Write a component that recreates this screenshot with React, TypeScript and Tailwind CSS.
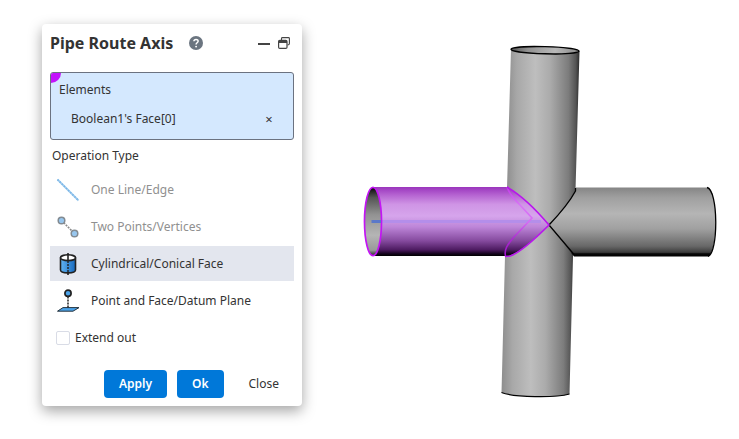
import React, { useState } from 'react';

interface Operation {
  id: string;
  label: string;
  icon: React.ReactNode;
  disabled?: boolean;
}

const LineIcon = () => (
  <svg viewBox="0 0 24 24" className="w-6 h-6">
    <path d="M1.5 1.5 L22.5 22.5" stroke="#a3cdef" strokeWidth="1.9" />
    <path d="M1.5 1.5 L22.5 22.5" stroke="#78b5e6" strokeWidth="1.6" strokeDasharray="1.5 1.5" />
  </svg>
);

const PointsIcon = () => (
  <svg viewBox="0 0 24 24" className="w-6 h-6">
    <path d="M5.5 5.5 L18.5 18.5" stroke="#8b8b8b" strokeWidth="1.6" strokeDasharray="2 1" />
    <circle cx="5.5" cy="5.5" r="3.3" fill="#97c6ee" stroke="#828a91" strokeWidth="1.5" />
    <circle cx="18.5" cy="18.5" r="3.3" fill="#97c6ee" stroke="#828a91" strokeWidth="1.5" />
  </svg>
);

const CylinderIcon = () => (
  <svg viewBox="0 0 24 24" className="w-6 h-6">
    <defs>
      <linearGradient id="iconBlue" x1="0" x2="1">
        <stop offset="0" stopColor="#62b4f4" />
        <stop offset="1" stopColor="#1669bd" />
      </linearGradient>
    </defs>
    <path d="M4.5 5.5 V18 C4.5 21.8 19.5 21.8 19.5 18 V5.5" fill="url(#iconBlue)" stroke="#222" strokeWidth="1.6" />
    <ellipse cx="12" cy="5.7" rx="7.5" ry="2.9" fill="#fff" stroke="#222" strokeWidth="1.6" />
    <path d="M12 1 V8 M12 20 V23" stroke="#222" strokeWidth="1.6" />
    <path d="M12 9 V20" stroke="#222" strokeWidth="1.4" strokeDasharray="2 1" />
  </svg>
);

const PlaneIcon = () => (
  <svg viewBox="0 0 24 24" className="w-6 h-6">
    <path d="M1.5 22.2 L7 18.6 H23 L17 22.2 Z" fill="#4ba3ea" stroke="#26343f" strokeWidth="1" />
    <path d="M12 7.5 V19" stroke="#222" strokeWidth="1.5" strokeDasharray="2 1" />
    <circle cx="12" cy="4.2" r="3.1" fill="#4ba3ea" stroke="#222" strokeWidth="1.7" />
  </svg>
);

const operations: Operation[] = [
  { id: 'line', label: 'One Line/Edge', icon: <LineIcon />, disabled: true },
  { id: 'points', label: 'Two Points/Vertices', icon: <PointsIcon />, disabled: true },
  { id: 'face', label: 'Cylindrical/Conical Face', icon: <CylinderIcon /> },
  { id: 'plane', label: 'Point and Face/Datum Plane', icon: <PlaneIcon /> },
];

const PipeModel = () => (
  <svg viewBox="342 24 385 382" className="w-full h-auto" role="img" aria-label="Pipe model">
    <defs>
      <linearGradient id="vertical" x1="0" x2="1">
        <stop offset="0" stopColor="#8d8d8d" />
        <stop offset="0.15" stopColor="#a8a8a8" />
        <stop offset="0.4" stopColor="#bebebe" />
        <stop offset="0.6" stopColor="#ababab" />
        <stop offset="0.85" stopColor="#7c7c7c" />
        <stop offset="0.95" stopColor="#545454" />
        <stop offset="1" stopColor="#2a2a2a" />
      </linearGradient>
      <linearGradient id="horizontal" x1="0" x2="0" y1="0" y2="1">
        <stop offset="0" stopColor="#858585" />
        <stop offset="0.15" stopColor="#a0a0a0" />
        <stop offset="0.38" stopColor="#b5b5b5" />
        <stop offset="0.6" stopColor="#a0a0a0" />
        <stop offset="0.85" stopColor="#686868" />
        <stop offset="0.94" stopColor="#3c3c3c" />
        <stop offset="0.96" stopColor="#080808" />
        <stop offset="1" stopColor="#000" />
      </linearGradient>
      <linearGradient id="selected" x1="0" x2="0" y1="0" y2="1">
        <stop offset="0" stopColor="#9a35bd" />
        <stop offset="0.12" stopColor="#b665d2" />
        <stop offset="0.25" stopColor="#cf94e5" />
        <stop offset="0.42" stopColor="#d6a5ec" />
        <stop offset="0.58" stopColor="#bd85d8" />
        <stop offset="0.78" stopColor="#854a9e" />
        <stop offset="0.91" stopColor="#4d1b61" />
        <stop offset="0.97" stopColor="#12031a" />
        <stop offset="1" stopColor="#000" />
      </linearGradient>
      <linearGradient id="inside" x1="0" x2="0" y1="0" y2="1">
        <stop offset="0" stopColor="#050505" />
        <stop offset="0.15" stopColor="#555" />
        <stop offset="0.4" stopColor="#929292" />
        <stop offset="0.7" stopColor="#b5b5b5" />
        <stop offset="0.92" stopColor="#999" />
        <stop offset="1" stopColor="#222" />
      </linearGradient>
      <linearGradient id="mouth" x1="0" x2="1">
        <stop offset="0" stopColor="#555" />
        <stop offset="0.25" stopColor="#929292" />
        <stop offset="0.65" stopColor="#b9b9b9" />
        <stop offset="1" stopColor="#888" />
      </linearGradient>
      <linearGradient id="innerEdge" gradientUnits="userSpaceOnUse" x1="0" x2="0" y1="188" y2="256">
        <stop offset="0" stopColor="#c63cec" />
        <stop offset="0.25" stopColor="#d873f6" />
        <stop offset="0.5" stopColor="#d76bf5" />
        <stop offset="0.75" stopColor="#a92bce" />
        <stop offset="1" stopColor="#a010ca" />
      </linearGradient>
    </defs>

    {/* upright pipe, one half each side of the joint */}
    <path d="M511 49 L579.5 51 L575.5 190 L575 230 H506 L507 188 Z" fill="url(#vertical)" />
    <path d="M505.8 222 H574.5 L573 256 L569.5 394 C555 398.5 518 397 501.5 393 L505 256 Z" fill="url(#vertical)" />
    <ellipse cx="545" cy="50.2" rx="34" ry="3.6" transform="rotate(1.5 545 50.2)" fill="url(#mouth)" stroke="#000" strokeWidth="1.4" />
    <path d="M501.5 392.5 C515 397.5 555 398 569.5 394" stroke="#000" strokeWidth="1.2" fill="none" />

    {/* right branch */}
    <path d="M575.5 187.5 H708 C718 190 718 253 708 256.5 H574 Q564 244 549 225 Q568 205 575.5 191 Z" fill="url(#horizontal)" />
    <path d="M575.5 188 V191 Q568 205 549 225 L574 254.5" stroke="#000" strokeWidth="1.3" fill="none" />
    <path d="M707 187.5 C718.5 190 718.5 253 708 256.5" stroke="#000" strokeWidth="1.3" fill="none" />

    {/* picked branch */}
    <path d="M373 187 H507 C521 195 538 212 549 225 C538 236 520 253 508 256 H373 Z" fill="url(#selected)" />
    <path d="M380 221.5 H541" stroke="#b48eea" strokeWidth="3" />
    <path d="M507 187 C509 193 514 199 520 205 L532 218 L514 237 C507 245 504 250 505.5 256" stroke="url(#innerEdge)" strokeWidth="1.6" fill="none" />
    <path d="M507 187 C521 195 538 212 549 225 C538 236 520 253 510 256 L505 256.5" stroke="#b914ee" strokeWidth="1.6" fill="none" />
    <ellipse cx="373" cy="221.5" rx="8.5" ry="34.2" fill="url(#inside)" stroke="#c315f4" strokeWidth="1.7" />
    <path d="M371.5 221.5 H381" stroke="#5b78c9" strokeWidth="3" />
  </svg>
);

const App: React.FC = () => {
  const [selected, setSelected] = useState('face');
  const [extendOut, setExtendOut] = useState(false);
  const [elements, setElements] = useState(["Boolean1's Face[0]"]);

  return (
    <main className="flex items-start gap-10 min-h-screen bg-white pl-[42px] pr-3 pt-6 font-['Noto_Sans','Open_Sans',sans-serif] text-[12px] leading-5 text-[#333]">
      <section className="w-[260px] shrink-0 rounded bg-white px-2 pb-2 shadow-[0_5px_14px_rgba(0,0,0,0.36)]">
        <header className="flex items-center h-12 pb-2.5">
          <h1 className="text-[16px] leading-6 font-bold">Pipe Route Axis</h1>
          <button aria-label="Help" className="ml-4">
            <svg viewBox="0 0 14 14" className="w-3.5 h-3.5">
              <circle cx="7" cy="7" r="7" fill="#6b7580" />
              <path d="M4.9 5.3 C5 2.8 9.2 2.9 9.1 5.3 C9 6.8 7.1 6.8 7.1 8.5" stroke="#fff" strokeWidth="1.5" fill="none" />
              <circle cx="7.1" cy="10.6" r="0.95" fill="#fff" />
            </svg>
          </button>
          <div className="ml-auto mr-1 flex items-center gap-2">
            <button aria-label="Minimize">
              <svg viewBox="0 0 12 12" className="w-3 h-3">
                <path d="M0 7 H12" stroke="#444" strokeWidth="2" />
              </svg>
            </button>
            <button aria-label="Restore">
              <svg viewBox="0 0 12 12" className="w-3 h-3" fill="none" stroke="#444">
                <path d="M3.5 3 V1.5 Q3.5 0.6 4.5 0.6 H10.5 Q11.4 0.6 11.4 1.5 V6.5 Q11.4 8 9.5 8" strokeWidth="1.1" />
                <rect x="0.6" y="3.4" width="8.4" height="8" rx="1.2" strokeWidth="1.2" />
                <path d="M0.6 4.8 H9" strokeWidth="2.4" />
              </svg>
            </button>
          </div>
        </header>

        <div className="relative overflow-hidden h-[68px] rounded-[3px] border border-[#6b7280] bg-[#d4e8fe] px-2 pt-[7px]">
          <span className="absolute left-0 top-0 w-2.5 h-2.5 rounded-br-full bg-[#c313fb]" />
          <h2>Elements</h2>
          {elements.map((name) => (
            <div key={name} className="flex items-center justify-between mt-[9px] px-3">
              <span>{name}</span>
              <button aria-label="Remove" onClick={() => setElements([])} className="w-2 text-[13px]">×</button>
            </div>
          ))}
        </div>

        <h2 className="h-8 px-0.5 leading-8">Operation Type</h2>
        <div className="flex flex-col gap-0.5">
          {operations.map((op) => (
            <button
              key={op.id}
              disabled={op.disabled}
              onClick={() => setSelected(op.id)}
              className={`flex items-center gap-[11px] h-[35px] px-1.5 text-left ${op.disabled ? 'text-[#909090]' : ''} ${selected === op.id ? 'bg-[#e3e6ee]' : ''}`}
            >
              {op.icon}
              {op.label}
            </button>
          ))}
        </div>

        <label className="flex items-center gap-[5px] h-10 px-1.5">
          <input
            type="checkbox"
            checked={extendOut}
            onChange={(e) => setExtendOut(e.target.checked)}
            className="appearance-none w-3.5 h-3.5 rounded-[2px] border border-[#d9dce6] bg-white checked:bg-[#0078d9]"
          />
          Extend out
        </label>

        <footer className="flex justify-end gap-2.5 mt-3">
          <button className="h-7 px-[15px] rounded bg-[#0078d9] font-semibold text-white">Apply</button>
          <button className="h-7 px-[15px] rounded bg-[#0078d9] font-semibold text-white">Ok</button>
          <button className="h-7 px-[15px] rounded">Close</button>
        </footer>
      </section>

      <div className="flex-1 min-w-0">
        <PipeModel />
      </div>
    </main>
  );
};

export default App;
